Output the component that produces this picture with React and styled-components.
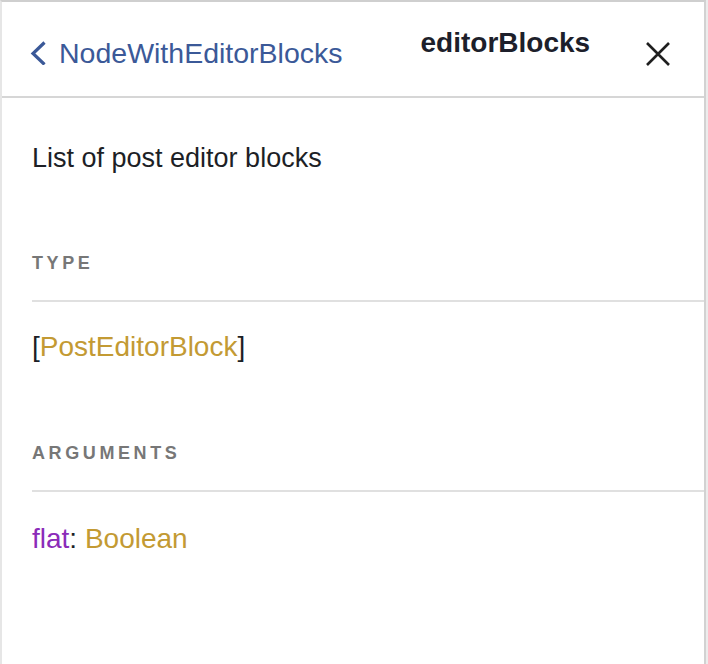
import React from 'react';
import styled, { createGlobalStyle } from 'styled-components';

const GlobalStyle = createGlobalStyle`
  html, body {
    margin: 0;
    padding: 0;
    background: #ececec;
    overflow: hidden;
  }
  body {
    font-family: "Liberation Sans", Arial, Helvetica, sans-serif;
    color: #1d1f26;
  }
`;

// panel ------------------------------------------------------------

const Panel = styled.div`
  box-sizing: border-box;
  width: 706px;
  height: 664px;
  background: #fff;
  border-top: 2px solid #cfcfcf;
  border-left: 2px solid #e6e6e6;
  border-right: 2px solid #d2d2d2;
`;

const Header = styled.div`
  display: flex;
  align-items: flex-start;
  height: 94px;
  padding: 0 34px 0 28px;
  border-bottom: 2px solid #d6d6d6;
`;

const BackLink = styled.a`
  display: inline-flex;
  align-items: center;
  gap: 12px;
  margin-top: 34px;
  font-size: 28.5px;
  line-height: 34px;
  color: #3b5998;
  text-decoration: none;
  cursor: pointer;
`;

const Title = styled.div`
  margin-top: 24px;
  margin-left: 78px;
  font-size: 28px;
  line-height: 34px;
  font-weight: bold;
  color: #1d1f2b;
`;

const CloseButton = styled.button`
  margin: 40px 0 0 auto;
  padding: 0;
  width: 24px;
  height: 24px;
  border: 0;
  background: none;
  cursor: pointer;
  display: flex;
`;

// content ----------------------------------------------------------

const Content = styled.div`
  padding: 40px 0 0 30px;
`;

const Description = styled.p`
  margin: 0;
  font-size: 27px;
  line-height: 40px;
`;

const CategoryTitle = styled.div`
  margin-top: ${(p) => p.$gap}px;
  padding-bottom: 25px;
  border-bottom: 2px solid #e0e0e0;
  font-size: 18px;
  line-height: 24px;
  font-weight: bold;
  letter-spacing: 3.6px;
  text-transform: uppercase;
  color: #777;
`;

const Item = styled.div`
  margin-top: ${(p) => p.$gap}px;
  font-size: 28px;
  line-height: 40px;
`;

const TypeName = styled.span`
  color: #c39a33;
`;

const ArgName = styled.span`
  color: #8b2bb9;
`;

const ChevronLeft = () => (
  <svg width="17" height="24" viewBox="0 0 17 24" fill="none">
    <polyline
      points="14.5,1.5 3,12.5 14.5,23.5"
      stroke="#3b5998"
      strokeWidth="3.2"
      strokeLinecap="butt"
      strokeLinejoin="miter"
    />
  </svg>
);

const CloseIcon = () => (
  <svg width="24" height="24" viewBox="0 0 24 24" fill="none">
    <path d="M1 1 L23 23 M23 1 L1 23" stroke="#1f1f1f" strokeWidth="2.6" />
  </svg>
);

export default function App() {
  return (
    <>
      <GlobalStyle />
      <Panel>
        <Header>
          <BackLink>
            <ChevronLeft />
            NodeWithEditorBlocks
          </BackLink>
          <Title>editorBlocks</Title>
          <CloseButton aria-label="Close">
            <CloseIcon />
          </CloseButton>
        </Header>
        <Content>
          <Description>List of post editor blocks</Description>

          <CategoryTitle $gap={73}>type</CategoryTitle>
          <Item $gap={25}>
            [<TypeName>PostEditorBlock</TypeName>]
          </Item>

          <CategoryTitle $gap={74}>arguments</CategoryTitle>
          <Item $gap={27}>
            <ArgName>flat</ArgName>: <TypeName>Boolean</TypeName>
          </Item>
        </Content>
      </Panel>
    </>
  );
}
